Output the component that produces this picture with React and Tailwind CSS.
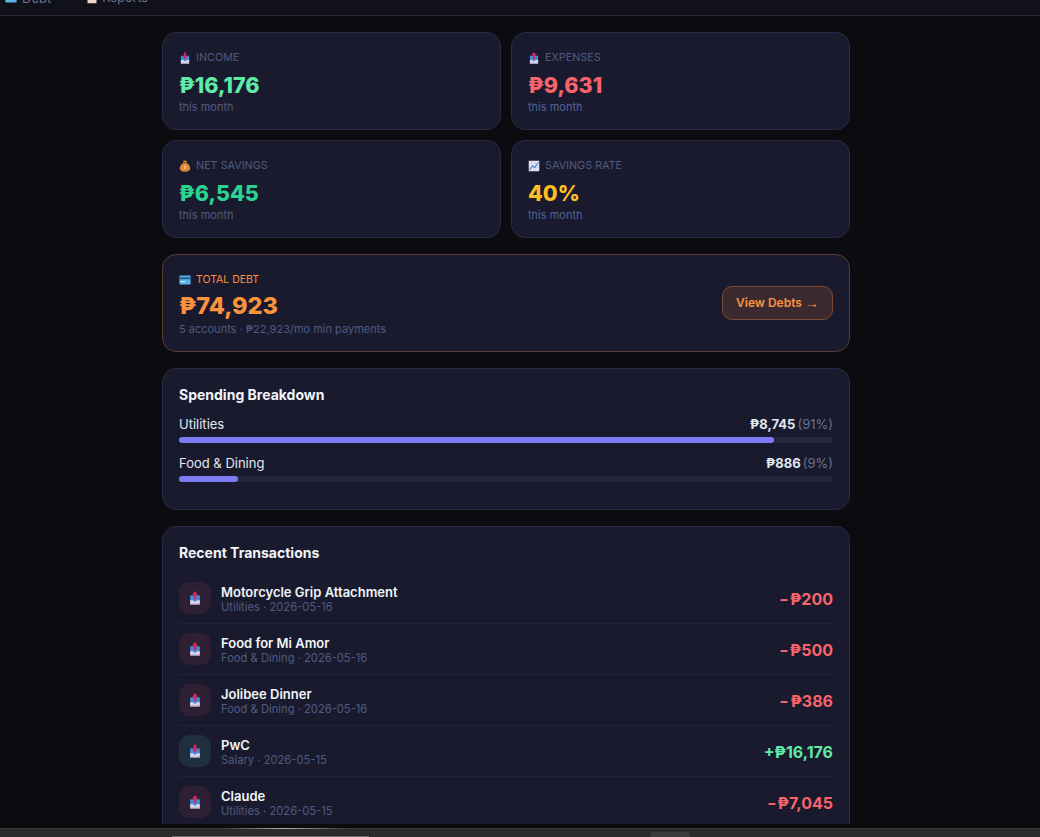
const F = { fontFamily: 'Inter, "Noto Sans", sans-serif' };

function Tray({ dir = 'up', className = 'w-3 h-3' }) {
  return (
    <svg viewBox="0 0 16 16" className={className}>
      <rect x="2.5" y="5" width="11" height="8" fill="#3f8fdc" />
      <path d="M2.5 10.5h3.2l1 1.5h2.6l1-1.5h3.2V15.5h-11z" fill="#ddd6ee" />
      <rect x="2.5" y="14.4" width="11" height="1.1" fill="#a99fc8" />
      {dir === 'up' ? (
        <path d="M8 0 11.4 4.2H9.5V9.5H6.5V4.2H4.6z" fill="#d8265c" />
      ) : (
        <path d="M8 10 11.4 5.8H9.5V0.5H6.5V5.8H4.6z" fill="#d8265c" />
      )}
    </svg>
  );
}

function Bag() {
  return (
    <svg viewBox="0 0 16 16" className="w-3 h-3">
      <path d="M5.5 1h5L9.6 3.6H6.4z" fill="#e39a3c" />
      <path d="M6 3.8h4C13 6 15 8.5 15 11c0 3-2.6 4.5-7 4.5S1 14 1 11c0-2.5 2-5 5-7.2z" fill="#e0873a" />
      <rect x="6" y="3" width="4" height="1.2" fill="#7a4a1c" />
      <rect x="7.2" y="7" width="1.6" height="5" fill="#fbe3a6" />
    </svg>
  );
}

function Chart() {
  return (
    <svg viewBox="0 0 16 16" className="w-3 h-3">
      <rect x="1" y="1" width="14" height="14" fill="#e7e2f0" />
      <path d="M1 5h14M1 10h14M5 1v14M10 1v14" stroke="#c8c2d8" strokeWidth="0.6" />
      <path d="M2 13 6 8l3 2 5-7" stroke="#3b88d8" strokeWidth="1.4" fill="none" />
    </svg>
  );
}

function CardIcon() {
  return (
    <svg viewBox="0 0 16 16" className="w-3 h-3">
      <rect x="0.5" y="2" width="15" height="12" rx="1" fill="#5cb4e6" />
      <rect x="0.5" y="4.4" width="15" height="2.6" fill="#1f5f8c" />
      <rect x="2" y="9.5" width="6" height="1.4" fill="#d8f0fa" />
    </svg>
  );
}

function Memo() {
  return (
    <svg viewBox="0 0 16 16" className="w-3 h-3">
      <rect x="2" y="1" width="12" height="14" fill="#f0d9c4" />
      <rect x="2" y="1" width="12" height="3" fill="#d98a60" />
      <path d="M4 7h8M4 10h8" stroke="#b08a78" strokeWidth="1" />
    </svg>
  );
}

function Stat({ icon, label, value, color, subColor }) {
  return (
    <div className="h-[98px] rounded-[14px] border border-[#2a2a45] bg-[#1a1a2e] px-4 pt-[16px]">
      <div className="flex items-center gap-[5px] h-[18px] text-[10.8px] text-[#4f5a80]">
        {icon}
        <span>{label}</span>
      </div>
      <div className={`mt-[2px] h-[31px] text-[21.5px] leading-[32px] font-extrabold ${color}`}>{value}</div>
      <div className={`h-[14px] text-[11px] leading-[14px] ${subColor}`}>this month</div>
    </div>
  );
}

function Bar({ name, value, pct, width }) {
  return (
    <div className="mb-[12px]">
      <div className="flex items-center justify-between h-[18px] text-[13px] mb-[3px]">
        <span className="text-[#e2e8f0]">{name}</span>
        <span className="flex items-center gap-[2px]">
          <span className="font-bold text-[#e2e8f0]">{value}</span>
          <span className="text-[#64748b]">{pct}</span>
        </span>
      </div>
      <div className="h-[6px] rounded-full bg-[#252540]">
        <div className="h-[6px] rounded-full bg-[#7c7cf5]" style={{ width }} />
      </div>
    </div>
  );
}

function Tx({ title, sub, sign, amount, income }) {
  return (
    <div className="flex items-center h-[51px] border-b border-[#23233b]">
      <div className={`flex items-center justify-center w-8 h-8 rounded-[10px] ${income ? 'bg-[#1f2f3d]' : 'bg-[#2f1f33]'}`}>
        <Tray dir={income ? 'down' : 'up'} className="w-[14px] h-[14px]" />
      </div>
      <div className="ml-[10px] flex-1 pt-[1px]">
        <div className="text-[13px] leading-[16px] font-semibold text-[#f1f5f9]">{title}</div>
        <div className="text-[11.2px] leading-[14px] text-[#4f5a80]">{sub}</div>
      </div>
      <div className={`pt-[2px] text-[16px] font-bold ${income ? 'text-[#5eeaa8]' : 'text-[#f8646c]'}`}>
        {income ? sign : <span className="inline-block w-[11px] origin-left scale-x-[1.3]">{sign}</span>}
        {amount}
      </div>
    </div>
  );
}

export default function App() {
  return (
    <div style={F} className="flex flex-col h-[837px] w-[1040px] overflow-hidden bg-[#0b0b10]">
      <div className="flex items-end h-[16px] shrink-0 overflow-hidden border-b border-[#25253d] bg-[#11111c]">
        <div className="flex items-center gap-[5px] ml-[5px] mb-[9px] text-[13px] leading-[16px] text-[#64748b]">
          <CardIcon />
          <span>Debt</span>
        </div>
        <div className="flex items-center gap-[4px] ml-[35px] mb-[9px] text-[12.5px] leading-[16px] text-[#64748b]">
          <Memo />
          <span>Reports</span>
        </div>
      </div>

      <div className="h-[808px] shrink-0 overflow-hidden">
        <div className="w-[688px] ml-[162px] pt-[16px]">
          <div className="grid grid-cols-2 gap-[10px]">
            <Stat icon={<Tray dir="down" />} label="INCOME" value="₱16,176" color="text-[#5eeaa8]" subColor="text-[#4f5a80]" />
            <Stat icon={<Tray dir="up" />} label="EXPENSES" value="₱9,631" color="text-[#f8646c]" subColor="text-[#4f6290]" />
            <Stat icon={<Bag />} label="NET SAVINGS" value="₱6,545" color="text-[#2ad38f]" subColor="text-[#4f5a80]" />
            <Stat icon={<Chart />} label="SAVINGS RATE" value="40%" color="text-[#fbbf24]" subColor="text-[#4f6290]" />
          </div>

          <div className="mt-[16px] flex items-center justify-between h-[98px] rounded-[14px] border border-[#5a3a30] bg-[#1a1a2e] px-4">
            <div className="pt-[2px]">
              <div className="flex items-center gap-[5px] h-[18px] text-[10.5px] text-[#fb923c]">
                <CardIcon />
                <span>TOTAL DEBT</span>
              </div>
              <div className="mt-[1px] h-[31px] text-[23.5px] leading-[32px] font-extrabold text-[#fb923c]">₱74,923</div>
              <div className="h-[16px] text-[11px] leading-[16px] text-[#4f5a80]">5 accounts · ₱22,923/mo min payments</div>
            </div>
            <div className="flex items-center justify-center w-[111px] h-[34px] rounded-[10px] border border-[#7a4a30] bg-[#3a2a30] text-[12px] font-semibold text-[#fb923c]">
              View Debts <span className="ml-[3px] text-[14px] font-normal" style={{ fontFamily: '"Liberation Sans", sans-serif' }}>→</span>
            </div>
          </div>

          <div className="mt-[16px] h-[142px] rounded-[14px] border border-[#2a2a45] bg-[#1a1a2e] px-4 pt-4">
            <div className="h-[20px] text-[14px] leading-[20px] font-bold text-[#f1f5f9] mb-[11px]">Spending Breakdown</div>
            <Bar name="Utilities" value="₱8,745" pct="(91%)" width="91%" />
            <Bar name="Food & Dining" value="₱886" pct="(9%)" width="9%" />
          </div>

          <div className="mt-[16px] rounded-[14px] border border-[#2a2a45] bg-[#1a1a2e] px-4 pt-4 pb-4">
            <div className="h-[20px] text-[14px] leading-[20px] font-bold text-[#f1f5f9] mb-[10px]">Recent Transactions</div>
            <Tx title="Motorcycle Grip Attachment" sub="Utilities · 2026-05-16" sign="-" amount="₱200" />
            <Tx title="Food for Mi Amor" sub="Food & Dining · 2026-05-16" sign="-" amount="₱500" />
            <Tx title="Jolibee Dinner" sub="Food & Dining · 2026-05-16" sign="-" amount="₱386" />
            <Tx title="PwC" sub="Salary · 2026-05-15" sign="+" amount="₱16,176" income />
            <Tx title="Claude" sub="Utilities · 2026-05-15" sign="-" amount="₱7,045" />
          </div>
        </div>
      </div>

      <div className="h-[4px] shrink-0" />

      <div className="relative flex-1 border-t border-[#3a3a3a] bg-[#2b2b2b]">
        <div className="absolute left-[223px] top-[-1px] w-[124px] h-[1px] bg-linear-to-r from-transparent via-[#b0b0b0] to-transparent" />
        <div className="absolute left-[172px] top-[7px] w-[197px] h-[1px] bg-[#6a6a6a]" />
        <div className="absolute left-[650px] top-[3px] w-[40px] h-[6px] rounded-t-[4px] bg-[#3c3c3c]" />
      </div>
    </div>
  );
}
